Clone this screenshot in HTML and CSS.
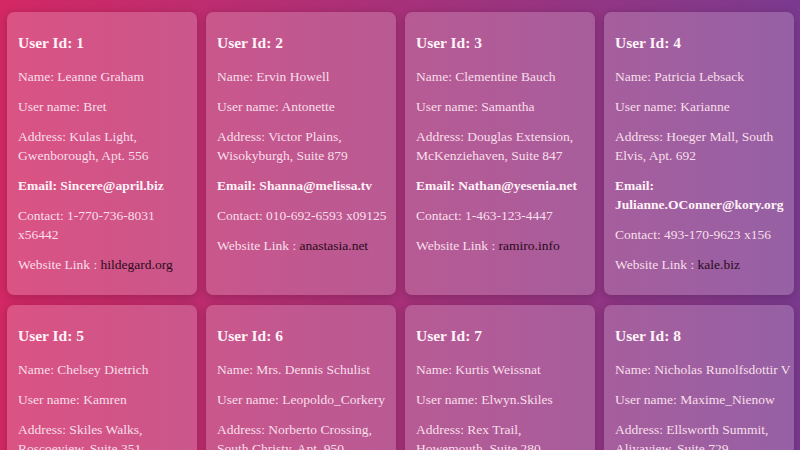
FILE: index.html
```html
<!DOCTYPE html>
<html lang="en">
<head>
  <meta charset="UTF-8">
  <meta name="viewport" content="width=device-width, initial-scale=1.0">
  <title>Users</title>
  <link rel="stylesheet" href="styles.css">
</head>
<body>
  <div class="container">
    <div class="card">
      <h3>User Id: 1</h3>
      <p>Name: Leanne Graham</p>
      <p>User name: Bret</p>
      <p>Address: Kulas Light, Gwenborough, Apt. 556</p>
      <p class="email">Email: Sincere@april.biz</p>
      <p>Contact: 1-770-736-8031 x56442</p>
      <p>Website Link : <a href="#">hildegard.org</a></p>
    </div>
    <div class="card">
      <h3>User Id: 2</h3>
      <p>Name: Ervin Howell</p>
      <p>User name: Antonette</p>
      <p>Address: Victor Plains, Wisokyburgh, Suite 879</p>
      <p class="email">Email: Shanna@melissa.tv</p>
      <p>Contact: 010-692-6593 x09125</p>
      <p>Website Link : <a href="#">anastasia.net</a></p>
    </div>
    <div class="card">
      <h3>User Id: 3</h3>
      <p>Name: Clementine Bauch</p>
      <p>User name: Samantha</p>
      <p>Address: Douglas Extension, McKenziehaven, Suite 847</p>
      <p class="email">Email: Nathan@yesenia.net</p>
      <p>Contact: 1-463-123-4447</p>
      <p>Website Link : <a href="#">ramiro.info</a></p>
    </div>
    <div class="card">
      <h3>User Id: 4</h3>
      <p>Name: Patricia Lebsack</p>
      <p>User name: Karianne</p>
      <p>Address: Hoeger Mall, South Elvis, Apt. 692</p>
      <p class="email">Email: Julianne.OConner@kory.org</p>
      <p>Contact: 493-170-9623 x156</p>
      <p>Website Link : <a href="#">kale.biz</a></p>
    </div>
    <div class="card">
      <h3>User Id: 5</h3>
      <p>Name: Chelsey Dietrich</p>
      <p>User name: Kamren</p>
      <p>Address: Skiles Walks, Roscoeview, Suite 351</p>
      <p class="email">Email: Lucio_Hettinger@annie.ca</p>
      <p>Contact: (254)954-1289</p>
      <p>Website Link : <a href="#">demarco.info</a></p>
    </div>
    <div class="card">
      <h3>User Id: 6</h3>
      <p>Name: Mrs. Dennis Schulist</p>
      <p>User name: Leopoldo_Corkery</p>
      <p>Address: Norberto Crossing, South Christy, Apt. 950</p>
      <p class="email">Email: Karley_Dach@jasper.info</p>
      <p>Contact: 1-477-935-8478 x6430</p>
      <p>Website Link : <a href="#">ola.org</a></p>
    </div>
    <div class="card">
      <h3>User Id: 7</h3>
      <p>Name: Kurtis Weissnat</p>
      <p>User name: Elwyn.Skiles</p>
      <p>Address: Rex Trail, Howemouth, Suite 280</p>
      <p class="email">Email: Telly.Hoeger@billy.biz</p>
      <p>Contact: 210.067.6132</p>
      <p>Website Link : <a href="#">elvis.io</a></p>
    </div>
    <div class="card">
      <h3>User Id: 8</h3>
      <p>Name: Nicholas Runolfsdottir V</p>
      <p>User name: Maxime_Nienow</p>
      <p>Address: Ellsworth Summit, Aliyaview, Suite 729</p>
      <p class="email">Email: Sherwood@rosamond.me</p>
      <p>Contact: 586.493.6943 x140</p>
      <p>Website Link : <a href="#">jacynthe.com</a></p>
    </div>
  </div>
</body>
</html>
```

FILE: styles.css
```css
body {
  margin: 0;
  font-family: "Liberation Serif", serif;
  background: linear-gradient(to right, #d32864, #7b3a8f);
  background-attachment: fixed;
  color: #f8dfea;
}

.container {
  display: grid;
  grid-template-columns: repeat(4, 1fr);
  gap: 10px 9px;
  padding: 12px 6px 12px 7px;
}

.card {
  padding: 21px 2px 10px 11px;
  border-radius: 7px;
  background-color: rgba(255, 255, 255, 0.2);
  box-shadow: 0 2px 10px rgba(0, 0, 0, 0.2);
}

.card h3 {
  margin: 0 0 14px;
  font-size: 15.5px;
  line-height: 20px;
  color: #fff3f8;
}

.card p {
  margin: 0 0 11px;
  font-size: 13.5px;
  line-height: 19px;
}

.card .email {
  font-weight: bold;
  color: #fff3f8;
}

.card a {
  color: #2a0c1e;
  text-decoration: none;
}
```
